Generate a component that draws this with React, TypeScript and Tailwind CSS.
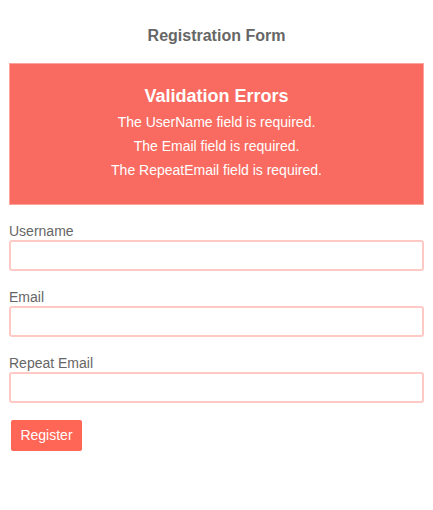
import React from 'react';

const fields = [
  { id: 'username', label: 'Username' },
  { id: 'email', label: 'Email' },
  { id: 'repeatEmail', label: 'Repeat Email' },
];

const errors = [
  'The UserName field is required.',
  'The Email field is required.',
  'The RepeatEmail field is required.',
];

export default function App() {
  return (
    <div className="min-h-[510px] bg-white px-[9px] pt-[26px] [font-family:'Liberation_Sans',Arial,sans-serif]">
      <h1 className="text-center text-[16px] leading-[20px] font-bold text-[#666666]">Registration Form</h1>

      {/* Validation summary */}
      <div className="mt-[17px] h-[142px] border border-[#fca39c] bg-[#f96b60] pt-[20px] text-center text-white">
        <h2 className="text-[18px] leading-[24px] font-bold">Validation Errors</h2>
        <ul className="mt-[2px]">
          {errors.map((e) => (
            <li key={e} className="text-[14px] leading-[24px]">{e}</li>
          ))}
        </ul>
      </div>

      <form className="mt-[17px]" onSubmit={(e) => e.preventDefault()}>
        {fields.map((f) => (
          <div key={f.id} className="mb-[17px]">
            <label htmlFor={f.id} className="block text-[14px] leading-[18px] text-[#666666]">
              {f.label}
            </label>
            <input
              id={f.id}
              type="text"
              className="block h-[31px] w-full rounded-[3px] border-2 border-[#ffc9c5] bg-white px-2 text-[14px] outline-none"
            />
          </div>
        ))}
        <button
          type="submit"
          className="ml-[2px] h-[31px] w-[71px] rounded-[2px] bg-[#ff6655] text-[14px] text-white"
        >
          Register
        </button>
      </form>
    </div>
  );
}
